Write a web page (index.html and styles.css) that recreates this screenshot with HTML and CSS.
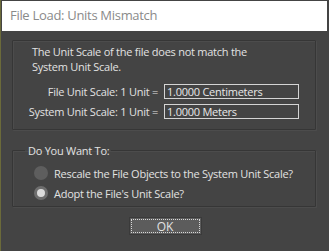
FILE: index.html
```html
<!DOCTYPE html>
<html lang="en">

<head>
    <meta charset="UTF-8">
    <title>File Load: Units Mismatch</title>
    <link rel="stylesheet" href="styles.css">
</head>

<body>
    <div class="window">
        <div class="titlebar">File Load: Units Mismatch</div>

        <div class="group info">
            <p class="message">The Unit Scale of the file does not match the<br>System Unit Scale.</p>

            <div class="scale-row">
                <label for="file-scale">File Unit Scale: 1 Unit =</label>
                <input type="text" id="file-scale" value="1.0000 Centimeters" readonly>
            </div>

            <div class="scale-row">
                <label for="system-scale">System Unit Scale: 1 Unit =</label>
                <input type="text" id="system-scale" value="1.0000 Meters" readonly>
            </div>
        </div>

        <fieldset class="group choice">
            <legend>Do You Want To:</legend>
            <label class="radio">
                <span class="dot"></span>
                Rescale the File Objects to the System Unit Scale?
            </label>
            <label class="radio checked">
                <span class="dot"></span>
                Adopt the File's Unit Scale?
            </label>
        </fieldset>

        <div class="actions">
            <button>OK</button>
        </div>
    </div>
</body>

</html>
```

FILE: styles.css
```css
body {
    margin: 0;
    background-color: #444444;
    font-family: "Open Sans", "Noto Sans", sans-serif;
    font-size: 11px;
    letter-spacing: -0.25px;
    color: #e2e2e2;
}

.window {
    width: 329px;
    height: 251px;
    box-sizing: border-box;
    padding-top: 1px;
    background-color: #444444;
    border-left: 1px solid #6b6a3a;
    overflow: hidden;
}

.titlebar {
    height: 30px;
    margin: 0 2px 0 1px;
    padding-left: 8px;
    background-color: #ffffff;
    color: #8a8a8a;
    font-size: 13px;
    letter-spacing: -0.3px;
    line-height: 29px;
}

.group {
    width: 304px;
    box-sizing: border-box;
    margin-left: 11px;
    border: 1px solid #363636;
    box-shadow: inset 1px 1px 0 #4c4c4c, 1px 1px 0 #4c4c4c;
    border-radius: 1px;
}

.info {
    height: 90px;
    margin-top: 9px;
    padding: 3px 0 0 19px;
}

.message {
    margin: 0 0 10px;
    line-height: 15px;
}

.scale-row {
    display: flex;
    align-items: center;
    margin-bottom: 5px;
}

.scale-row label {
    width: 146px;
    margin-left: -20px;
    margin-right: 6px;
    text-align: right;
    white-space: nowrap;
}

.scale-row input {
    width: 135px;
    height: 15px;
    box-sizing: border-box;
    padding: 0 2px;
    border: 1px solid #d4d4d4;
    background-color: #444444;
    color: #e8e8e8;
    font-family: inherit;
    font-size: 11px;
    letter-spacing: -0.25px;
    outline: none;
}

.choice {
    height: 64px;
    margin-top: 13px;
    margin-bottom: 0;
    padding: 5px 0 0 20px;
}

.choice legend {
    margin-left: -8px;
    padding: 0 2px 0 3px;
    line-height: 15px;
}

.radio {
    display: flex;
    align-items: center;
    gap: 6px;
    height: 20px;
    margin-left: 1px;
    white-space: nowrap;
}

.dot {
    width: 14px;
    height: 14px;
    border-radius: 50%;
    background-color: #5e5e5e;
    box-sizing: border-box;
}

.radio.checked .dot {
    background-color: #dcdcdc;
    border: 3px solid #6e6e6e;
}

.actions {
    display: flex;
    justify-content: center;
    margin-top: 10px;
}

button {
    width: 73px;
    height: 18px;
    padding: 0;
    border: 1px solid #3a3a3a;
    background-color: #5c5c5c;
    color: #e2e2e2;
    font-family: inherit;
    font-size: 12px;
    outline: 1px dotted #d8d8d8;
    outline-offset: -3px;
}
```
